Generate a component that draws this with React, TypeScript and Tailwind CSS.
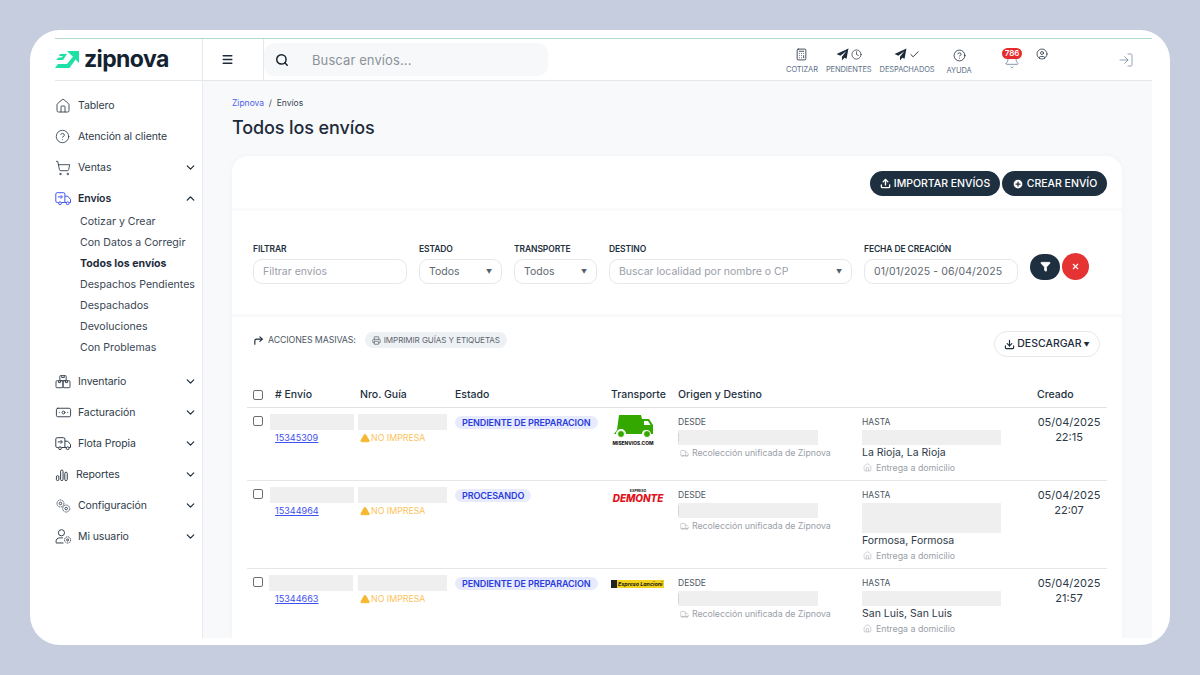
import React from 'react';
import {
  Home, CircleHelp, ShoppingCart, ChevronDown, ChevronUp, Menu, Search, Calculator, Clock, Check, Bell,
  CircleUser, LogIn, Banknote, CirclePlus, Filter, X, Printer, Download, TriangleAlert, CornerUpRight, Truck, Upload,
} from 'lucide-react';

const font = { fontFamily: 'Inter, "Liberation Sans", sans-serif' };

const Plane: React.FC<{ className?: string }> = ({ className }) => (
  <svg viewBox="0 0 24 24" className={className} fill="currentColor">
    <path d="M23 1 1 11l7 3.500L19 6l-8 10v7l4.500-5 4 2z" />
  </svg>
);

const ShipTruck: React.FC<{ className?: string }> = ({ className }) => (
  <svg viewBox="0 0 24 20" fill="none" stroke="currentColor" strokeWidth="1.400" className={className}>
    <path d="M5 15H3a2 2 0 0 1-2-2V3a2 2 0 0 1 2-2h9a2 2 0 0 1 2 2v12H9" />
    <path d="M14 6h4l4 4.500V15h-2M14 15h2" />
    <circle cx="7" cy="16" r="2" />
    <circle cx="18" cy="16" r="2" />
    <path d="M4 7h6M8 4.500 10.500 7 8 9.500" />
  </svg>
);

const Boxes: React.FC<{ className?: string }> = ({ className }) => (
  <svg viewBox="0 0 24 22" fill="none" stroke="currentColor" strokeWidth="1.400" className={className}>
    <rect x="7" y="1" width="10" height="8" rx="1" />
    <rect x="1" y="9" width="11" height="11" rx="1.500" />
    <rect x="12" y="9" width="11" height="11" rx="1.500" />
    <path d="M10 1v3h4V1M5 9v3h3V9M16 9v3h3V9" />
  </svg>
);

const Bars: React.FC<{ className?: string }> = ({ className }) => (
  <svg viewBox="0 0 20 20" fill="none" stroke="currentColor" strokeWidth="1.400" className={className}>
    <rect x="2" y="11" width="3.500" height="7" rx="1.700" />
    <rect x="8" y="3" width="3.500" height="15" rx="1.700" />
    <rect x="14" y="6" width="3.500" height="12" rx="1.700" />
  </svg>
);

const Gears: React.FC<{ className?: string }> = ({ className }) => (
  <svg viewBox="0 0 24 22" fill="none" stroke="currentColor" strokeWidth="1.400" strokeDasharray="2 1" className={className}>
    <circle cx="8" cy="7" r="5.500" />
    <circle cx="8" cy="7" r="2" strokeDasharray="none" />
    <circle cx="17" cy="15" r="5.500" />
    <circle cx="17" cy="15" r="2" strokeDasharray="none" />
  </svg>
);

const UserGear: React.FC<{ className?: string }> = ({ className }) => (
  <svg viewBox="0 0 24 22" fill="none" stroke="currentColor" strokeWidth="1.400" className={className}>
    <circle cx="9" cy="5.500" r="4.500" />
    <path d="M1 20v-1a6 6 0 0 1 6-6h4" />
    <path d="M1 20.500h11" />
    <circle cx="18" cy="16" r="4.500" strokeDasharray="2 1" />
    <circle cx="18" cy="16" r="1.500" />
  </svg>
);

const Logo: React.FC = () => (
  <svg viewBox="0 0 24 17" className="h-[17px] w-[24px]" fill="#1fe0a5">
    <path d="M12 0h12v12l-3.500-3.500L14.500 17H0l3-4h9l6-7.500L15 3z" />
    <path d="M5 3h7l-4 6H1l2.500-2.500h3L8 5H4z" />
  </svg>
);

const NavItem: React.FC<{ icon: React.ReactNode; label: string; chevron?: boolean; open?: boolean; tight?: boolean }> = ({ icon, label, chevron, open, tight }) => (
  <div className={`flex h-[31px] items-center pr-[5px] ${open ? 'font-semibold text-[#1d2b3a]' : 'text-[#2e3a48]'}`}>
    <span className={`flex shrink-0 items-center ${tight ? 'w-[21px]' : 'w-[23px]'}`}>{icon}</span>
    <span className="flex-1 text-[10.500px] tracking-[-0.1px]">{label}</span>
    {chevron && (open ? <ChevronUp className="size-[13px] text-[#1d2b3a]" strokeWidth={2.500} /> : <ChevronDown className="size-[13px] text-[#1d2b3a]" strokeWidth={2.200} />)}
  </div>
);

const Sidebar: React.FC = () => {
  const sub = ['Cotizar y Crear', 'Con Datos a Corregir', 'Todos los envíos', 'Despachos Pendientes', 'Despachados', 'Devoluciones', 'Con Problemas'];
  return (
    <aside className="w-[148px] shrink-0 border-r border-[#e8eaed] bg-white pt-[9px]">
      <NavItem icon={<Home className="size-[16px]" strokeWidth={1.300} />} label="Tablero" />
      <NavItem icon={<CircleHelp className="size-[15px]" strokeWidth={1.300} />} label="Atención al cliente" />
      <NavItem icon={<ShoppingCart className="size-[16px]" strokeWidth={1.300} />} label="Ventas" chevron />
      <NavItem icon={<ShipTruck className="h-[14px] w-[17px] text-[#3f51f0]" />} label="Envíos" chevron open />
      <div className="-mt-[3px] pb-[8px] pl-[25px] text-[10.600px] text-[#3a4654]">
        {sub.map((s) => (
          <div key={s} className={`flex h-[21px] items-center whitespace-nowrap ${s === 'Todos los envíos' ? 'font-bold text-[#1d2b3a]' : ''}`}>{s}</div>
        ))}
      </div>
      <NavItem icon={<Boxes className="h-[14px] w-[16px]" />} label="Inventario" chevron />
      <NavItem icon={<Banknote className="size-[17px]" strokeWidth={1.300} />} label="Facturación" chevron />
      <NavItem icon={<ShipTruck className="h-[14px] w-[17px]" />} label="Flota Propia" chevron />
      <NavItem tight icon={<Bars className="size-[14px]" />} label="Reportes" chevron />
      <NavItem icon={<Gears className="h-[14px] w-[16px]" />} label="Configuración" chevron />
      <NavItem icon={<UserGear className="h-[15px] w-[17px]" />} label="Mi usuario" chevron />
    </aside>
  );
};

const TopIcon: React.FC<{ label: string; className: string; children: React.ReactNode }> = ({ label, className, children }) => (
  <div className={`flex flex-col items-center ${className}`}>
    <div className="flex h-[14px] items-center gap-[2px] text-[#1d2b3a]">{children}</div>
    <span className="mt-[4px] text-[7.500px] leading-[9px] tracking-[-0.1px] whitespace-nowrap text-[#5c7089]">{label}</span>
  </div>
);

const Header: React.FC = () => (
  <header className="flex h-[42px] shrink-0 border-b border-[#e4e6e9] bg-white shadow-[0_1px_2px_rgba(0,0,0,0.04)]">
    <div className="flex w-[148px] shrink-0 items-center gap-[5px] border-r border-[#e4e6e9]">
      <Logo />
      <span className="text-[23px] leading-none font-bold tracking-[-0.6px] text-[#13222f]">zipnova</span>
    </div>
    <div className="flex w-[61px] shrink-0 items-center border-r border-[#e4e6e9] pl-[18px]">
      <Menu className="size-[13px] text-[#1d2b3a]" strokeWidth={2.500} />
    </div>
    <div className="my-[4px] flex w-[284px] shrink-0 items-center rounded-[10px] bg-[#f7f8f9] pl-[11px]">
      <Search className="size-[14px] text-[#13222f]" strokeWidth={2.500} />
      <span className="mt-[2px] ml-[23px] text-[13px] tracking-[0.1px] text-[#8b929b]">Buscar envíos...</span>
    </div>
    <div className="flex flex-1 pt-[8px]">
      <TopIcon label="COTIZAR" className="ml-[238px]"><Calculator className="size-[13px]" strokeWidth={1.500} /></TopIcon>
      <TopIcon label="PENDIENTES" className="ml-[8px]"><Plane className="size-[13px]" /><Clock className="size-[11px]" strokeWidth={1.500} /></TopIcon>
      <TopIcon label="DESPACHADOS" className="ml-[8px]"><Plane className="size-[13px]" /><Check className="size-[11px]" strokeWidth={2} /></TopIcon>
      <TopIcon label="AYUDA" className="mt-[1px] ml-[12px]"><CircleHelp className="size-[13px]" strokeWidth={1.500} /></TopIcon>
      <div className="relative ml-[30px] flex h-[28px] w-[20px] items-end justify-center pb-[6px] text-[#5c7089]">
        <Bell className="size-[16px]" strokeWidth={1.100} />
        <span className="absolute top-[1px] left-0 rounded-full bg-[#e52b2b] px-[3px] text-[8px] leading-[11px] font-semibold text-white">786</span>
      </div>
      <div className="mt-[1px] ml-[14px]"><CircleUser className="size-[12px] text-[#1d2b3a]" strokeWidth={1.500} /></div>
      <div className="ml-[70px] pt-[5px]"><LogIn className="size-[16px] text-[#6f8299]" strokeWidth={1.100} /></div>
    </div>
  </header>
);

const Field: React.FC<{ label: string; className: string; children: React.ReactNode }> = ({ label, className, children }) => (
  <div className={className}>
    <div className="mb-[4px] text-[8.500px] leading-[11px] font-semibold tracking-[-0.1px] whitespace-nowrap text-[#22303e]">{label}</div>
    <div className="flex h-[25px] items-center justify-between rounded-[9px] border border-[#e5e7ea] bg-white px-[9px] text-[10.500px] whitespace-nowrap">{children}</div>
  </div>
);

const Caret = () => <span className="text-[6px] text-[#55606c]">▼</span>;

const Filters: React.FC = () => (
  <div className="flex h-[103px] items-start gap-[12px] pt-[33px] pl-[21px]">
    <Field label="FILTRAR" className="w-[154px]"><span className="text-[#9aa0a8]">Filtrar envíos</span></Field>
    <Field label="ESTADO" className="w-[83px]"><span className="text-[#5e6771]">Todos</span><Caret /></Field>
    <Field label="TRANSPORTE" className="w-[83px]"><span className="text-[#5e6771]">Todos</span><Caret /></Field>
    <Field label="DESTINO" className="w-[243px]"><span className="text-[#9aa0a8]">Buscar localidad por nombre o CP</span><Caret /></Field>
    <Field label="FECHA DE CREACIÓN" className="w-[154px]"><span className="tracking-[0.1px] text-[#5e6771]">01/01/2025 - 06/04/2025</span></Field>
    <div className="mt-[9px] flex items-center gap-[2px]">
      <span className="flex h-[26px] w-[30px] items-center justify-center rounded-full bg-[#1e3040]"><Filter className="size-[11px] fill-white text-white" /></span>
      <span className="flex h-[27px] w-[27px] items-center justify-center rounded-full bg-[#e53232]"><X className="size-[9px] text-white" strokeWidth={3} /></span>
    </div>
  </div>
);

const MisEnvios = () => (
  <div className="w-[44px] text-center">
    <svg viewBox="0 0 44 24" className="mx-auto h-[24px] w-[44px]" fill="#35a800">
      <path d="M8 1h22l1 4h7l4 6v9h-3a4 4 0 0 0-8 0H15a5 5 0 0 0-10 0H3l3-4z" />
      <path d="M33 7h4l2.500 4H33z" fill="#fff" />
      <circle cx="10" cy="20" r="3.500" stroke="#fff" />
      <circle cx="36" cy="20" r="3.500" stroke="#fff" />
    </svg>
    <div className="mt-[2px] text-[4.800px] leading-[6px] font-extrabold text-[#222]">MISENVIOS.COM</div>
  </div>
);

const Demonte = () => (
  <div className="mt-[2px] w-[54px] text-center">
    <div className="text-[3.500px] leading-[4px] font-bold text-[#222]">EXPRESO</div>
    <div className="text-[10px] leading-[10px] font-extrabold tracking-[-0.1px] text-[#e1121a] italic">DEMONTE</div>
  </div>
);

const Lanzioni = () => (
  <div className="mt-[5px] flex h-[8px] w-[53px] bg-[#f2d21a] text-[5.300px] leading-[8px] font-bold whitespace-nowrap text-[#1a1a1a] italic">
    <span className="mr-[1px] h-[8px] w-[6px] shrink-0 bg-[#222]" />Expreso Lancioni
  </div>
);

const Skel: React.FC<{ className: string; children?: React.ReactNode }> = ({ className, children }) => <div className={`bg-[#efefef] ${className}`}>{children}</div>;

type Row = { id: string; state: string; logo: React.ReactNode; city: string; date: string; time: string; height: string; toBlock: string; shift: string };

const rows: Row[] = [
  { id: '15345309', state: 'PENDIENTE DE PREPARACION', logo: <MisEnvios />, city: 'La Rioja, La Rioja', date: '05/04/2025', time: '22:15', height: 'h-[73px]', toBlock: 'h-[15px]', shift: '-ml-[5px]' },
  { id: '15344964', state: 'PROCESANDO', logo: <Demonte />, city: 'Formosa, Formosa', date: '05/04/2025', time: '22:07', height: 'h-[88px]', toBlock: 'h-[30px]', shift: '-ml-[5px]' },
  { id: '15344663', state: 'PENDIENTE DE PREPARACION', logo: <Lanzioni />, city: 'San Luis, San Luis', date: '05/04/2025', time: '21:57', height: 'h-[73px]', toBlock: 'h-[15px]', shift: '-ml-[6px]' },
];

const cols = 'grid grid-cols-[28px_85px_95px_156px_67px_184px_175px_70px]';

const TableRow: React.FC<{ row: Row }> = ({ row }) => (
  <div className={`${cols} ${row.height} border-b border-[#e4e6e9] pt-[6px]`}>
    <div className="pt-[2px] pl-[6px]"><div className="size-[10px] rounded-[2px] border border-[#6b6f75]" /></div>
    <div>
      <Skel className={`h-[16px] w-[84px] ${row.shift}`} />
      <div className="mt-[1px] text-[9.100px] leading-[14px] text-[#3f51f0] underline">{row.id}</div>
    </div>
    <div>
      <Skel className="-ml-[2px] h-[16px] w-[89px]" />
      <div className="mt-[1px] flex items-center gap-[1px] text-[8.800px] leading-[14px] text-[#fbc35a]">
        <TriangleAlert className="size-[10px] fill-[#f7b731] text-[#f7b731]" />NO IMPRESA
      </div>
    </div>
    <div>
      <span className="mt-[2px] block w-fit rounded-full bg-[#e8ebfb] px-[7px] text-[9px] leading-[13px] font-semibold tracking-[-0.1px] whitespace-nowrap text-[#2a3be0]">{row.state}</span>
    </div>
    <div>{row.logo}</div>
    <div>
      <div className="pt-[2px] text-[8.500px] leading-[12px] text-[#4d5763]">DESDE</div>
      <Skel className="mt-[2px] flex h-[15px] w-[140px] items-center"><div className="h-[9px] w-px bg-[#d4d4d4]" /></Skel>
      <div className="mt-[1px] flex items-center gap-[3px] pl-[2px] text-[8.800px] leading-[14px] tracking-[-0.05px] text-[#9aa0a8]">
        <Truck className="size-[9px]" strokeWidth={1.300} />Recolección unificada de Zipnova
      </div>
    </div>
    <div>
      <div className="pt-[2px] text-[8.500px] leading-[12px] text-[#4d5763]">HASTA</div>
      <Skel className={`mt-[2px] w-[139px] ${row.toBlock}`} />
      <div className="text-[10.500px] leading-[15px] text-[#2e3a48]">{row.city}</div>
      <div className="flex items-center gap-[4px] pl-[1px] text-[8.800px] leading-[15px] text-[#9aa0a8]">
        <Home className="size-[9px]" strokeWidth={1.300} />Entrega a domicilio
      </div>
    </div>
    <div className="w-[64px] pt-[1px] text-center text-[11px] leading-[15px] text-[#2e3a48]">
      <div>{row.date}</div>
      <div>{row.time}</div>
    </div>
  </div>
);

const Card: React.FC = () => (
  <div className="mt-[16px] flex-1 rounded-t-[16px] bg-white shadow-[0_0_6px_rgba(0,0,0,0.03)]">
    <div className="flex h-[55px] items-start justify-end gap-[2px] border-b-[3px] border-[#fafafa] pt-[15px] pr-[15px] text-[10.500px] font-medium text-white">
      <span className="flex h-[25px] w-[130px] items-center justify-center gap-[3px] rounded-full bg-[#1e3040] whitespace-nowrap"><Upload className="size-[11px]" strokeWidth={3} />IMPORTAR ENVÍOS</span>
      <span className="flex h-[25px] w-[105px] items-center justify-center gap-[3px] rounded-full bg-[#1e3040] whitespace-nowrap"><CirclePlus className="size-[12px] fill-white text-[#1e3040]" strokeWidth={2.500} />CREAR ENVÍO</span>
    </div>
    <Filters />
    <div className="border-t-[3px] border-[#fafafa] px-[15px]">
      <div className="flex h-[66px] items-start justify-between pt-[14px] pr-[7px] pl-[6px]">
        <div className="flex items-center pt-[1px]">
          <CornerUpRight className="size-[11px] text-[#1d2b3a]" strokeWidth={2.500} />
          <span className="ml-[4px] text-[8.800px] tracking-[-0.1px] text-[#4d5763]">ACCIONES MASIVAS:</span>
          <span className="ml-[9px] flex h-[16px] items-center gap-[3px] rounded-full bg-[#eef1f4] px-[7px] text-[8.100px] tracking-[-0.1px] whitespace-nowrap text-[#5e6771]">
            <Printer className="size-[9px]" strokeWidth={2} />IMPRIMIR GUÍAS Y ETIQUETAS
          </span>
        </div>
        <span className="flex h-[26px] w-[106px] items-center justify-center gap-[2px] rounded-full border border-[#e5e7ea] bg-white text-[10.500px] font-medium whitespace-nowrap text-[#1d2b3a]">
          <Download className="size-[11px]" strokeWidth={2.500} />DESCARGAR<span className="text-[6px]">▼</span>
        </span>
      </div>
      <div className={`${cols} h-[25px] items-center border-b border-[#dfe1e4] text-[10.500px] font-medium text-[#22303e]`}>
        <div className="pl-[6px]"><div className="size-[10px] rounded-[2px] border border-[#6b6f75]" /></div>
        <div># Envío</div>
        <div>Nro. Guía</div>
        <div>Estado</div>
        <div>Transporte</div>
        <div>Origen y Destino</div>
        <div />
        <div>Creado</div>
      </div>
      {rows.map((r) => <TableRow key={r.id} row={r} />)}
    </div>
  </div>
);

const App: React.FC = () => (
  <div className="h-[675px] w-[1200px] overflow-hidden bg-[#c5cddf] p-[30px]" style={font}>
    <div className="h-full rounded-[30px] bg-white pt-[8px] pr-[18px] pb-[7px] pl-[25px]">
      <div className="flex h-full flex-col overflow-hidden border-t border-[#b3d8cc]">
        <Header />
        <div className="flex min-h-0 flex-1">
          <Sidebar />
          <main className="flex min-w-0 flex-1 flex-col overflow-hidden bg-[#f8f9fa] pt-[17px] pr-[30px] pl-[29px]">
            <div className="text-[8.500px] leading-[11px] text-[#3a4654]"><span className="text-[#4f5ff0]">Zipnova</span>&nbsp; /&nbsp; Envíos</div>
            <h1 className="mt-[7px] text-[18px] leading-[24px] font-medium tracking-[-0.1px] text-[#1d2b3a]">Todos los envíos</h1>
            <Card />
          </main>
        </div>
      </div>
    </div>
  </div>
);

export default App;
